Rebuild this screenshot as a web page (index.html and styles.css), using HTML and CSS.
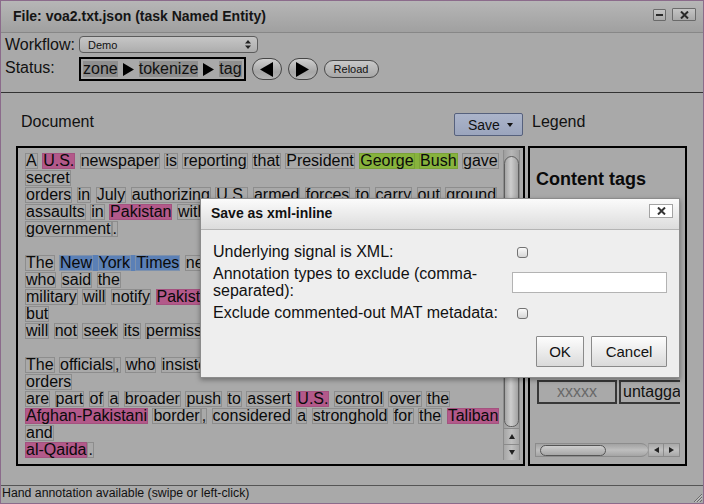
FILE: index.html
```html
<!DOCTYPE html>
<html lang="en">
<head>
<meta charset="utf-8">
<title>MAT - voa2.txt.json</title>
<link rel="stylesheet" href="styles.css">
</head>
<body>
<div class="window">
  <div class="titlebar">
    <span class="title">File: voa2.txt.json (task Named Entity)</span>
    <span class="wbtn wmin"><span class="bar"></span></span>
    <span class="wbtn wclose"><svg width="9" height="8" viewBox="0 0 9 8"><path d="M1 0.5 L8 7.5 M8 0.5 L1 7.5" stroke="#2a2a2a" stroke-width="2"/></svg></span>
  </div>

  <div class="toolbar">
    <span class="lbl">Workflow:</span>
    <div class="select"><span>Demo</span><svg width="6" height="11" viewBox="0 0 6 11"><path d="M0 4.5 L3 1 L6 4.5 Z M0 6.5 L3 10 L6 6.5 Z" fill="#222"/></svg></div>
    <span class="lbl lbl-status">Status:</span>
    <div class="statusrow">
      <div class="steps">
        <span class="step">zone</span>
        <svg width="11" height="13" viewBox="0 0 11 13"><path d="M0 0 L11 6.5 L0 13 Z" fill="#000"/></svg>
        <span class="step">tokenize</span>
        <svg width="11" height="13" viewBox="0 0 11 13"><path d="M0 0 L11 6.5 L0 13 Z" fill="#000"/></svg>
        <span class="step">tag</span>
      </div>
      <span class="oval"><svg width="13" height="15" viewBox="0 0 13 15"><path d="M13 0 L0 7.5 L13 15 Z" fill="#000"/></svg></span>
      <span class="oval"><svg width="13" height="15" viewBox="0 0 13 15"><path d="M0 0 L13 7.5 L0 15 Z" fill="#000"/></svg></span>
      <span class="pill">Reload</span>
    </div>
  </div>

  <div class="main">
    <div class="hdr-doc">
      <span class="hdr-lbl">Document</span>
      <span class="save">Save<svg width="6" height="4" viewBox="0 0 6 4"><path d="M0 0 L6 0 L3 4 Z" fill="#111"/></svg></span>
    </div>
    <div class="hdr-legend hdr-lbl">Legend</div>

    <div class="panel doc">
      <div class="doctext">
        <div class="ln"><span class="t">A</span> <span class="t p">U.S.</span> <span class="t">newspaper</span> <span class="t">is</span> <span class="t">reporting</span> <span class="t">that</span> <span class="t">President</span> <span class="ph g"><span class="t">George</span> <span class="t">Bush</span></span> <span class="t">gave</span></div>
        <div class="ln"><span class="t">secret</span></div>
        <div class="ln"><span class="t">orders</span> <span class="t">in</span> <span class="t">July</span> <span class="t">authorizing</span> <span class="t">U.S.</span> <span class="t">armed</span> <span class="t">forces</span> <span class="t">to</span> <span class="t">carry</span> <span class="t">out</span> <span class="t">ground</span></div>
        <div class="ln"><span class="t">assaults</span> <span class="t">in</span> <span class="t p">Pakistan</span> <span class="t">without</span></div>
        <div class="ln"><span class="t">government</span><span class="t">.</span></div>
        <div class="ln"></div>
        <div class="ln"><span class="t">The</span> <span class="ph b"><span class="t">New</span> <span class="t">York</span> <span class="t">Times</span></span> <span class="t">newspaper</span></div>
        <div class="ln"><span class="t">who</span> <span class="t">said</span> <span class="t">the</span></div>
        <div class="ln"><span class="t">military</span> <span class="t">will</span> <span class="t">notify</span> <span class="t p">Pakistan</span></div>
        <div class="ln"><span class="t">but</span></div>
        <div class="ln"><span class="t">will</span> <span class="t">not</span> <span class="t">seek</span> <span class="t">its</span> <span class="t">permission</span></div>
        <div class="ln"></div>
        <div class="ln"><span class="t">The</span> <span class="t">officials</span><span class="t">,</span> <span class="t">who</span> <span class="t">insisted</span></div>
        <div class="ln"><span class="t">orders</span></div>
        <div class="ln"><span class="t">are</span> <span class="t">part</span> <span class="t">of</span> <span class="t">a</span> <span class="t">broader</span> <span class="t">push</span> <span class="t">to</span> <span class="t">assert</span> <span class="t p">U.S.</span> <span class="t">control</span> <span class="t">over</span> <span class="t">the</span></div>
        <div class="ln"><span class="t p">Afghan-Pakistani</span> <span class="t">border</span><span class="t">,</span> <span class="t">considered</span> <span class="t">a</span> <span class="t">stronghold</span> <span class="t">for</span> <span class="t">the</span> <span class="t p">Taliban</span></div>
        <div class="ln"><span class="t">and</span></div>
        <div class="ln"><span class="t p">al-Qaida</span><span class="t">.</span></div>
      </div>
      <div class="vscroll">
        <div class="vtrack"><div class="vthumb"></div></div>
        <div class="varr"><svg width="6" height="5" viewBox="0 0 6 5"><path d="M0 5 L3 0 L6 5 Z" fill="#222"/></svg></div>
        <div class="varr"><svg width="6" height="5" viewBox="0 0 6 5"><path d="M0 0 L3 5 L6 0 Z" fill="#222"/></svg></div>
      </div>
    </div>

    <div class="panel legend">
      <div class="legend-inner">
        <div class="ltitle">Content tags</div>
        <div class="tagrow">
          <span class="tag tx">xxxxx</span>
          <span class="tag tu">untaggable</span>
        </div>
        <div class="hscroll">
          <div class="htrack"><div class="hthumb"></div></div>
          <div class="harr"><svg width="5" height="6" viewBox="0 0 5 6"><path d="M5 0 L0 3 L5 6 Z" fill="#222"/></svg></div>
          <div class="harr"><svg width="5" height="6" viewBox="0 0 5 6"><path d="M0 0 L5 3 L0 6 Z" fill="#222"/></svg></div>
        </div>
      </div>
    </div>
  </div>

  <div class="statusbar">
    <span class="statustext">Hand annotation available (swipe or left-click)</span>
    <svg class="grip" width="9" height="9" viewBox="0 0 9 9"><path d="M9 1 L1 9 M9 4 L4 9 M9 7 L7 9" stroke="#6a6a6a" stroke-width="1"/><path d="M9 2 L2 9 M9 5 L5 9" stroke="#c4c4c4" stroke-width="1"/></svg>
  </div>

  <div class="dialog">
    <div class="dlg-title">
      <span class="dlg-title-text">Save as xml-inline</span>
      <span class="dlg-close"><svg width="9" height="8" viewBox="0 0 9 8"><path d="M1 0.5 L8 7.5 M8 0.5 L1 7.5" stroke="#333" stroke-width="2"/></svg></span>
    </div>
    <div class="dlg-body">
      <span class="dlg-lbl">Underlying signal is XML:</span>
      <span class="cb"></span>
      <span class="dlg-lbl">Annotation types to exclude (comma-<br>separated):</span>
      <span class="txt"></span>
      <span class="dlg-lbl">Exclude commented-out MAT metadata:</span>
      <span class="cb"></span>
    </div>
    <div class="dlg-btns">
      <span class="btn ok">OK</span>
      <span class="btn cancel">Cancel</span>
    </div>
  </div>
</div>
</body>
</html>
```

FILE: styles.css
```css
* { box-sizing: border-box; }
html, body { margin: 0; padding: 0; }
body {
  font-family: "Liberation Sans", Arial, Helvetica, sans-serif;
  color: #111;
  background: #a9a9a9;
}

.window {
  position: relative;
  width: 704px;
  height: 504px;
  border: 1px solid #8b6b8b;
  background: #a9a9a9;
  display: flex;
  flex-direction: column;
  overflow: hidden;
}

/* title bar */
.titlebar {
  flex: none;
  height: 32px;
  border-bottom: 1px solid #878787;
  background: linear-gradient(#b6b6b6, #a0a0a0);
  display: flex;
  align-items: flex-start;
  padding: 0 7px 0 12px;
}
.title {
  flex: 1;
  font-weight: bold;
  font-size: 14px;
  margin-top: 7px;
  color: #151515;
}
.wbtn {
  display: flex;
  align-items: center;
  justify-content: center;
  border: 1px solid #6a6a6a;
  border-radius: 1px;
  background: linear-gradient(#c4c4c4, #a9a9a9);
}
.wmin { width: 13px; height: 12px; margin-top: 8px; margin-right: 6px; }
.wmin .bar { width: 7px; height: 2px; background: #2a2a2a; }
.wclose { width: 24px; height: 13px; margin-top: 7px; }

/* toolbar */
.toolbar {
  flex: none;
  height: 60px;
  border-bottom: 1px solid #333;
  padding: 3px 0 0 4px;
  display: grid;
  grid-template-columns: 74px auto;
  grid-template-rows: 17px 24px;
  row-gap: 4px;
  align-items: center;
  justify-items: start;
}
.lbl { font-size: 16px; line-height: 17px; }
.lbl-status { align-self: start; margin-top: 2px; }
.select {
  width: 179px;
  height: 17px;
  border: 1px solid #5c5c5c;
  border-radius: 4px;
  background: linear-gradient(#c6c6c6, #adadad);
  display: flex;
  align-items: center;
  justify-content: space-between;
  padding: 0 6px 0 8px;
  font-size: 11px;
}
.statusrow { display: flex; align-items: center; gap: 6px; }
.steps {
  height: 24px;
  border: 2px solid #000;
  padding: 2px;
  display: flex;
  align-items: center;
  gap: 5px;
}
.step {
  background: #8f8f8f;
  font-size: 16px;
  line-height: 16px;
  height: 16px;
}
.oval {
  width: 30px;
  height: 22px;
  border: 1px solid #464646;
  border-radius: 11px;
  background: linear-gradient(#d0d0d0, #a6a6a6 65%, #b6b6b6);
  display: flex;
  align-items: center;
  justify-content: center;
}
.pill {
  width: 55px;
  height: 18px;
  border: 1px solid #4a4a4a;
  border-radius: 9px;
  background: linear-gradient(#c8c8c8, #a8a8a8);
  font-size: 11px;
  line-height: 16px;
  text-align: center;
}

/* main area */
.main {
  flex: 1;
  padding: 20px 0 0 15px;
  display: grid;
  grid-template-columns: 509px 159px;
  grid-template-rows: 23px 320px;
  column-gap: 3px;
  row-gap: 10px;
  align-content: start;
}
.hdr-lbl { font-size: 16px; line-height: 18px; }
.hdr-doc {
  display: flex;
  justify-content: space-between;
  align-items: flex-start;
  padding: 0 2px 0 5px;
}
.hdr-legend { padding-left: 4px; }
.save {
  height: 23px;
  width: 69px;
  border: 1px solid #56617d;
  border-radius: 2px;
  background: linear-gradient(#abb4ca, #9ba5bd);
  display: flex;
  align-items: center;
  gap: 7px;
  padding-left: 13px;
  font-size: 14px;
}

.panel { border: 2px solid #000; }
.doc { display: flex; }
.doctext {
  flex: 1;
  min-width: 0;
  overflow: hidden;
  padding: 5px 0 0 7px;
}
.ln {
  height: 17px;
  white-space: nowrap;
  font-size: 16px;
  line-height: 17px;
  color: #0a0a0a;
}
.t {
  display: inline-block;
  vertical-align: top;
  height: 16px;
  line-height: 14px;
  border: 1px solid #8d8d8d;
}
.t.p { background: #b3598a; border-color: #a4527f; }
.ph {
  display: inline-block;
  vertical-align: top;
  height: 16px;
  line-height: 16px;
}
.ph.g { background: #87b33d; }
.ph.g .t { border-color: #7aa236; }
.ph.b { background: #5b80b6; }
.ph.b .t { border-color: #7d91ad; }

.vscroll {
  width: 17px;
  margin: 2px 3px 4px 0;
  display: flex;
  flex-direction: column;
  border-left: 1px solid #8c8c8c;
  border-right: 1px solid #8c8c8c;
  background: linear-gradient(90deg, #9e9e9e, #b6b6b6 50%, #a0a0a0);
}
.vtrack { flex: 1; padding: 6px 0 1px; }
.vthumb {
  height: 100%;
  border: 1px solid #5e5e5e;
  border-radius: 8px 8px 7px 7px;
  background: linear-gradient(90deg, #a4a4a4, #cdcdcd 45%, #a2a2a2);
}
.varr {
  height: 16px;
  flex: none;
  display: flex;
  align-items: center;
  justify-content: center;
  border-top: 1px solid #8a8a8a;
  background: linear-gradient(90deg, #a6a6a6, #c0c0c0 50%, #a6a6a6);
}

.legend { overflow: hidden; }
.legend-inner {
  width: 150px;
  height: 100%;
  overflow: hidden;
  display: flex;
  flex-direction: column;
}
.ltitle {
  font-weight: bold;
  font-size: 18px;
  line-height: 21px;
  padding: 21px 0 0 6px;
  color: #0a0a0a;
}
.tagrow {
  margin-top: auto;
  margin-left: 7px;
  display: flex;
  gap: 2px;
}
.tag {
  flex: none;
  height: 24px;
  border: 2px solid #383838;
  font-size: 16px;
  line-height: 20px;
  white-space: nowrap;
}
.tx { width: 80px; text-align: center; color: #686868; }
.tu { padding: 0 4px 0 2px; }
.hscroll {
  flex: none;
  margin: 39px 0 7px 5px;
  height: 14px;
  display: flex;
}
.htrack {
  flex: 1;
  padding: 1px 0 0 4px;
  border: 1px solid #8c8c8c;
  border-right: none;
  border-radius: 0 7px 7px 0;
  background: linear-gradient(#a2a2a2, #bebebe 50%, #a4a4a4);
}
.hthumb {
  width: 66px;
  height: 11px;
  border: 1px solid #555;
  border-radius: 6px;
  background: linear-gradient(#cecece, #a6a6a6);
}
.harr {
  width: 16px;
  flex: none;
  display: flex;
  align-items: center;
  justify-content: center;
  border: 1px solid #8c8c8c;
  border-left-color: #9a9a9a;
  background: linear-gradient(#a8a8a8, #c0c0c0 50%, #a8a8a8);
}
.harr + .harr { border-left: none; }

/* status bar */
.statusbar {
  flex: none;
  height: 18px;
  border-top: 1px solid #555;
  display: flex;
  justify-content: space-between;
  align-items: flex-end;
  padding: 0 1px 1px 1px;
  font-size: 12.3px;
}
.statustext { align-self: flex-start; line-height: 14px; color: #111; }

/* modal dialog */
.dialog {
  position: absolute;
  left: 199px;
  top: 197px;
  width: 480px;
  height: 180px;
  border: 1px solid #8c8c8c;
  background: #eeeeee;
  box-shadow: 0 2px 5px rgba(0, 0, 0, 0.35);
  display: flex;
  flex-direction: column;
}
.dlg-title {
  flex: none;
  height: 31px;
  border-bottom: 1px solid #b4b4b4;
  background: linear-gradient(#fbfbfb, #dcdcdc);
  display: flex;
  justify-content: space-between;
  align-items: flex-start;
  padding: 0 6px 0 10px;
}
.dlg-title-text { font-weight: bold; font-size: 14px; margin-top: 6px; color: #111; }
.dlg-close {
  width: 24px;
  height: 14px;
  margin-top: 5px;
  border: 1px solid #a3a3a3;
  background: #fff;
  display: flex;
  align-items: center;
  justify-content: center;
}
.dlg-body {
  padding: 13px 12px 0;
  display: grid;
  grid-template-columns: 299px 155px;
  grid-template-rows: 17px 34px 17px;
  row-gap: 5px;
  align-items: center;
}
.dlg-lbl { font-size: 16px; line-height: 17px; color: #111; }
.cb {
  width: 11px;
  height: 11px;
  margin: 2px 0 0 5px;
  border: 1px solid #727272;
  border-radius: 3px;
  background: linear-gradient(#fafafa, #d6d6d6);
}
.txt {
  width: 155px;
  height: 21px;
  border: 1px solid #b3b3b3;
  background: #fff;
}
.dlg-btns {
  display: flex;
  justify-content: flex-end;
  gap: 7px;
  padding: 15px 12px 0;
}
.btn {
  height: 31px;
  border: 1px solid #8a8a8a;
  border-radius: 1px;
  background: linear-gradient(#fdfdfd, #dadada);
  font-size: 15px;
  display: flex;
  align-items: center;
  justify-content: center;
  color: #111;
}
.ok { width: 48px; }
.cancel { width: 76px; }
```
